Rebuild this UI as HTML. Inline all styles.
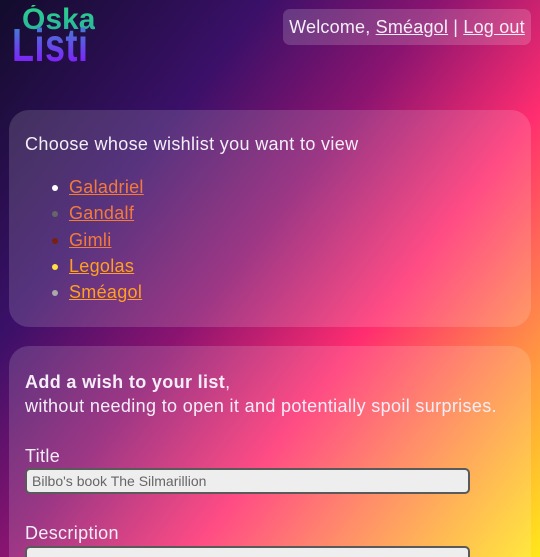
<!DOCTYPE html>
<html><head><meta charset="utf-8"><style>
html,body{margin:0;padding:0;height:557px;overflow:hidden}
body{width:540px;font-family:"Liberation Sans",sans-serif;color:#f4eef8;
background:linear-gradient(128deg,#120c2c 0%,#3a1068 27%,#8a1470 45%,#ff2d70 64%,#ff7a50 78%,#ffe81a 100%);position:relative}
.logo{position:absolute;left:12px;top:0;font-weight:bold;line-height:1}
.l1{position:absolute;left:10px;top:5px;font-size:30px;background:linear-gradient(#2ed28a,#28b0a0);-webkit-background-clip:text;color:transparent}
.l2{position:absolute;left:0;top:22px;font-size:36px;background:linear-gradient(#3a8ad0,#8a10ff);-webkit-background-clip:text;color:transparent;letter-spacing:.5px;transform:scaleY(1.3);transform-origin:0 0;display:block}
.top{position:absolute;left:283px;top:9px;width:248px;height:36px;background:rgba(255,255,255,.17);border-radius:7px;font-size:18px;line-height:36px;text-align:center;letter-spacing:.2px}
a{color:inherit}
.card{position:absolute;left:9px;width:522px;background:rgba(255,255,255,.15);border-radius:20px}
.c1{top:110px;height:217px}
.c2{top:346px;height:211px;border-radius:20px 20px 0 0}
.h{position:absolute;left:16px;font-size:18px;letter-spacing:.35px;white-space:nowrap}
ul{position:absolute;left:60px;top:64px;margin:0;padding:0;list-style:none;font-size:18px}
li{height:26.3px;line-height:26px;position:relative;letter-spacing:.3px}
li:before{content:"";position:absolute;left:-17px;top:11px;width:6px;height:6px;border-radius:50%;background:var(--b)}
.in{position:absolute;left:16px;width:436px;height:22px;background:#eee;border:2px solid #5a5a5a;border-radius:5px;font-size:14px;color:#666;line-height:22px;padding-left:5px;box-sizing:content-box}
</style></head><body>
<div class="logo"><span class="l1">Óska</span><span class="l2">Listi</span></div>
<div class="top">Welcome, <a href="#">Sméagol</a> | <a href="#">Log out</a></div>
<div class="card c1">
<div class="h" style="top:24px">Choose whose wishlist you want to view</div>
<ul>
<li style="--b:#fff;color:#f47a3a"><a href="#">Galadriel</a></li>
<li style="--b:#666;color:#f47a3a"><a href="#">Gandalf</a></li>
<li style="--b:#7a2010;color:#f47a3a"><a href="#">Gimli</a></li>
<li style="--b:#ffe040;color:#ffa020"><a href="#">Legolas</a></li>
<li style="--b:#aaa;color:#ffa020"><a href="#">Sméagol</a></li>
</ul>
</div>
<div class="card c2">
<div class="h" style="top:26px"><b>Add a wish to your list</b>,</div>
<div class="h" style="top:50px">without needing to open it and potentially spoil surprises.</div>
<div class="h" style="top:100px">Title</div>
<div class="in" style="top:122px">Bilbo's book The Silmarillion</div>
<div class="h" style="top:177px">Description</div>
<div class="in" style="top:200px;height:9px;border-bottom:none;border-radius:5px 5px 0 0"></div>
</div>
</body></html>
